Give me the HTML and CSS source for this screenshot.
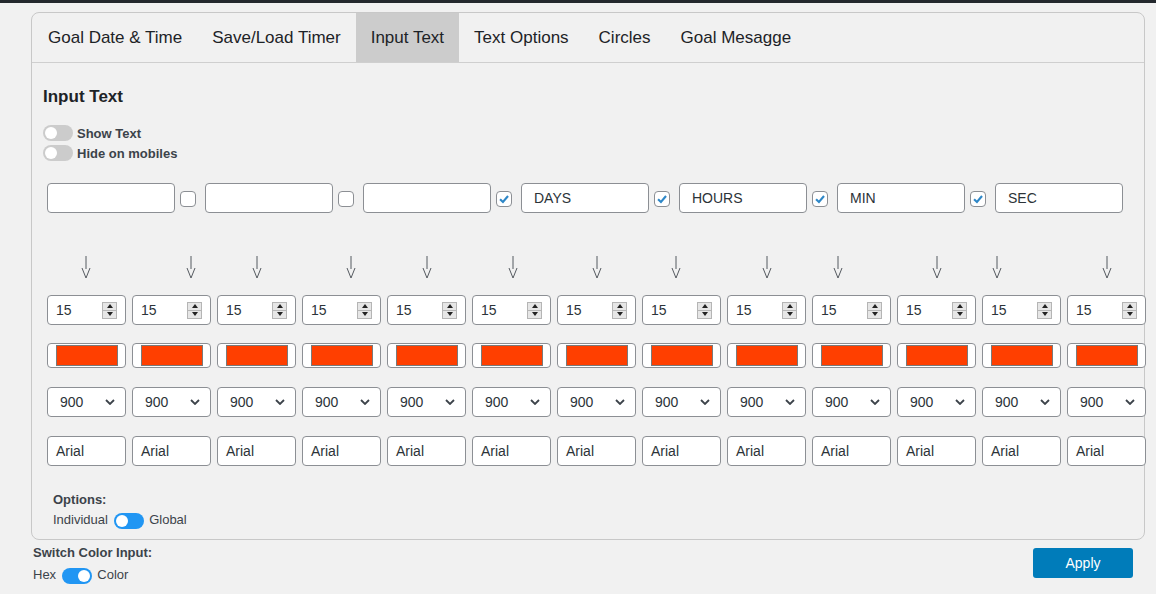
FILE: index.html
```html
<!DOCTYPE html>
<html lang="en">
<head>
    <meta charset="UTF-8">
    <title>Countdown Settings</title>
    <link rel="stylesheet" href="styles.css">
</head>
<body>
    <div class="admin-bar"></div>

    <div class="panel">
        <div class="tabs">
            <div class="tab">Goal Date &amp; Time</div>
            <div class="tab">Save/Load Timer</div>
            <div class="tab active">Input Text</div>
            <div class="tab">Text Options</div>
            <div class="tab">Circles</div>
            <div class="tab">Goal Mesagge</div>
        </div>

        <div class="tab-body">
            <h2>Input Text</h2>

            <div class="switch-row"><span class="toggle"></span><b>Show Text</b></div>
            <div class="switch-row"><span class="toggle"></span><b>Hide on mobiles</b></div>

            <!-- labels row -->
            <div class="labels">
                <div class="field"></div>
                <span class="check"></span>
                <div class="field"></div>
                <span class="check"></span>
                <div class="field"></div>
                <span class="check on"><svg viewBox="0 0 16 16"><path d="M3.5 8.2 L6.8 11.4 L12.6 4.6"/></svg></span>
                <div class="field">DAYS</div>
                <span class="check on"><svg viewBox="0 0 16 16"><path d="M3.5 8.2 L6.8 11.4 L12.6 4.6"/></svg></span>
                <div class="field">HOURS</div>
                <span class="check on"><svg viewBox="0 0 16 16"><path d="M3.5 8.2 L6.8 11.4 L12.6 4.6"/></svg></span>
                <div class="field">MIN</div>
                <span class="check on"><svg viewBox="0 0 16 16"><path d="M3.5 8.2 L6.8 11.4 L12.6 4.6"/></svg></span>
                <div class="field">SEC</div>
            </div>

            <div class="grid-row arrows">
                <div class="cell"><svg class="arrow" style="margin-left: 34px" viewBox="0 0 10 24"><path d="M5 1 V14 M1 13 L5 23 L9 13"/></svg></div>
                <div class="cell"><svg class="arrow" style="margin-left: 54px" viewBox="0 0 10 24"><path d="M5 1 V14 M1 13 L5 23 L9 13"/></svg></div>
                <div class="cell"><svg class="arrow" style="margin-left: 35px" viewBox="0 0 10 24"><path d="M5 1 V14 M1 13 L5 23 L9 13"/></svg></div>
                <div class="cell"><svg class="arrow" style="margin-left: 44px" viewBox="0 0 10 24"><path d="M5 1 V14 M1 13 L5 23 L9 13"/></svg></div>
                <div class="cell"><svg class="arrow" style="margin-left: 35px" viewBox="0 0 10 24"><path d="M5 1 V14 M1 13 L5 23 L9 13"/></svg></div>
                <div class="cell"><svg class="arrow" style="margin-left: 36px" viewBox="0 0 10 24"><path d="M5 1 V14 M1 13 L5 23 L9 13"/></svg></div>
                <div class="cell"><svg class="arrow" style="margin-left: 35px" viewBox="0 0 10 24"><path d="M5 1 V14 M1 13 L5 23 L9 13"/></svg></div>
                <div class="cell"><svg class="arrow" style="margin-left: 29px" viewBox="0 0 10 24"><path d="M5 1 V14 M1 13 L5 23 L9 13"/></svg></div>
                <div class="cell"><svg class="arrow" style="margin-left: 35px" viewBox="0 0 10 24"><path d="M5 1 V14 M1 13 L5 23 L9 13"/></svg></div>
                <div class="cell"><svg class="arrow" style="margin-left: 21px" viewBox="0 0 10 24"><path d="M5 1 V14 M1 13 L5 23 L9 13"/></svg></div>
                <div class="cell"><svg class="arrow" style="margin-left: 35px" viewBox="0 0 10 24"><path d="M5 1 V14 M1 13 L5 23 L9 13"/></svg></div>
                <div class="cell"><svg class="arrow" style="margin-left: 10px" viewBox="0 0 10 24"><path d="M5 1 V14 M1 13 L5 23 L9 13"/></svg></div>
                <div class="cell"><svg class="arrow" style="margin-left: 35px" viewBox="0 0 10 24"><path d="M5 1 V14 M1 13 L5 23 L9 13"/></svg></div>
            </div>

            <!-- font sizes -->
            <div class="grid-row">
                <div class="cell box number">15<span class="spin"><i class="up"></i><i class="down"></i></span></div>
                <div class="cell box number">15<span class="spin"><i class="up"></i><i class="down"></i></span></div>
                <div class="cell box number">15<span class="spin"><i class="up"></i><i class="down"></i></span></div>
                <div class="cell box number">15<span class="spin"><i class="up"></i><i class="down"></i></span></div>
                <div class="cell box number">15<span class="spin"><i class="up"></i><i class="down"></i></span></div>
                <div class="cell box number">15<span class="spin"><i class="up"></i><i class="down"></i></span></div>
                <div class="cell box number">15<span class="spin"><i class="up"></i><i class="down"></i></span></div>
                <div class="cell box number">15<span class="spin"><i class="up"></i><i class="down"></i></span></div>
                <div class="cell box number">15<span class="spin"><i class="up"></i><i class="down"></i></span></div>
                <div class="cell box number">15<span class="spin"><i class="up"></i><i class="down"></i></span></div>
                <div class="cell box number">15<span class="spin"><i class="up"></i><i class="down"></i></span></div>
                <div class="cell box number">15<span class="spin"><i class="up"></i><i class="down"></i></span></div>
                <div class="cell box number">15<span class="spin"><i class="up"></i><i class="down"></i></span></div>
            </div>

            <!-- colors -->
            <div class="grid-row colors">
                <div class="cell box color"><span class="swatch"></span></div>
                <div class="cell box color"><span class="swatch"></span></div>
                <div class="cell box color"><span class="swatch"></span></div>
                <div class="cell box color"><span class="swatch"></span></div>
                <div class="cell box color"><span class="swatch"></span></div>
                <div class="cell box color"><span class="swatch"></span></div>
                <div class="cell box color"><span class="swatch"></span></div>
                <div class="cell box color"><span class="swatch"></span></div>
                <div class="cell box color"><span class="swatch"></span></div>
                <div class="cell box color"><span class="swatch"></span></div>
                <div class="cell box color"><span class="swatch"></span></div>
                <div class="cell box color"><span class="swatch"></span></div>
                <div class="cell box color"><span class="swatch"></span></div>
            </div>

            <!-- font weights -->
            <div class="grid-row">
                <div class="cell box select">900<svg viewBox="0 0 10 6"><path d="M1 1 L5 5 L9 1"/></svg></div>
                <div class="cell box select">900<svg viewBox="0 0 10 6"><path d="M1 1 L5 5 L9 1"/></svg></div>
                <div class="cell box select">900<svg viewBox="0 0 10 6"><path d="M1 1 L5 5 L9 1"/></svg></div>
                <div class="cell box select">900<svg viewBox="0 0 10 6"><path d="M1 1 L5 5 L9 1"/></svg></div>
                <div class="cell box select">900<svg viewBox="0 0 10 6"><path d="M1 1 L5 5 L9 1"/></svg></div>
                <div class="cell box select">900<svg viewBox="0 0 10 6"><path d="M1 1 L5 5 L9 1"/></svg></div>
                <div class="cell box select">900<svg viewBox="0 0 10 6"><path d="M1 1 L5 5 L9 1"/></svg></div>
                <div class="cell box select">900<svg viewBox="0 0 10 6"><path d="M1 1 L5 5 L9 1"/></svg></div>
                <div class="cell box select">900<svg viewBox="0 0 10 6"><path d="M1 1 L5 5 L9 1"/></svg></div>
                <div class="cell box select">900<svg viewBox="0 0 10 6"><path d="M1 1 L5 5 L9 1"/></svg></div>
                <div class="cell box select">900<svg viewBox="0 0 10 6"><path d="M1 1 L5 5 L9 1"/></svg></div>
                <div class="cell box select">900<svg viewBox="0 0 10 6"><path d="M1 1 L5 5 L9 1"/></svg></div>
                <div class="cell box select">900<svg viewBox="0 0 10 6"><path d="M1 1 L5 5 L9 1"/></svg></div>
            </div>

            <!-- font families -->
            <div class="grid-row">
                <div class="cell box">Arial</div>
                <div class="cell box">Arial</div>
                <div class="cell box">Arial</div>
                <div class="cell box">Arial</div>
                <div class="cell box">Arial</div>
                <div class="cell box">Arial</div>
                <div class="cell box">Arial</div>
                <div class="cell box">Arial</div>
                <div class="cell box">Arial</div>
                <div class="cell box">Arial</div>
                <div class="cell box">Arial</div>
                <div class="cell box">Arial</div>
                <div class="cell box">Arial</div>
            </div>

            <div class="options">
                <b>Options:</b>
                <div class="choice">Individual <span class="toggle blue"></span> Global</div>
            </div>
        </div>
    </div>

    <div class="footer">
        <div class="color-switch">
            <b>Switch Color Input:</b>
            <div class="choice">Hex <span class="toggle blue right"></span> Color</div>
        </div>
        <button class="apply">Apply</button>
    </div>
</body>
</html>
```

FILE: styles.css
```css
body {
    margin: 0;
    background-color: #f1f1f1;
    color: #3c434a;
    font-family: "Liberation Sans", Arial, sans-serif;
    font-size: 13px;
}

.admin-bar {
    height: 3px;
    background-color: #23282d;
}

.panel {
    margin: 9px 0 0 31px;
    width: 1112px;
    border: 1px solid #c8c8c8;
    border-radius: 8px;
}

.tabs {
    display: flex;
    border-bottom: 1px solid #cfcfcf;
}

.tab {
    padding: 0 15px;
    height: 49px;
    line-height: 50px;
    font-size: 17px;
    color: #1d2327;
}

.tab:first-child {
    padding-left: 16px;
}

.tab.active {
    background-color: #cccccc;
}

.tab-body {
    padding: 21px 0 9px 11px;
}

h2 {
    margin: 0 0 13px;
    font-size: 17px;
    line-height: 26px;
    font-weight: 600;
    color: #1d2327;
}

.switch-row {
    display: flex;
    align-items: center;
    height: 20px;
}

.switch-row b {
    margin-left: 4px;
}

.toggle {
    display: inline-block;
    position: relative;
    width: 30px;
    height: 16px;
    border-radius: 8px;
    background-color: #cccccc;
    vertical-align: middle;
}

.toggle::after {
    content: "";
    position: absolute;
    top: 2px;
    left: 2px;
    width: 12px;
    height: 12px;
    border-radius: 50%;
    background-color: #fff;
}

.toggle.blue {
    background-color: #2196f3;
}

.toggle.right::after {
    left: 16px;
}

.labels {
    display: flex;
    align-items: center;
    margin: 20px 0 0 4px;
}

.field {
    box-sizing: border-box;
    width: 128px;
    height: 30px;
    padding-left: 12px;
    line-height: 29px;
    font-size: 14px;
    color: #2c3338;
    background-color: #fff;
    border: 1px solid #8c8f94;
    border-radius: 4px;
}

.check {
    box-sizing: border-box;
    width: 16px;
    height: 16px;
    margin: 2px 9px 0 5px;
    background-color: #fff;
    border: 1px solid #8c8f94;
    border-radius: 4px;
}

.check svg {
    display: block;
    width: 14px;
    height: 14px;
    fill: none;
    stroke: #2e87c7;
    stroke-width: 2.4;
}

.grid-row {
    display: flex;
    gap: 6px;
    margin: 19px 0 0 4px;
}

.arrows {
    margin-top: 42px;
    margin-bottom: -3px;
}

.cell {
    flex: 0 0 79px;
    box-sizing: border-box;
}

.arrow {
    display: block;
    width: 10px;
    height: 24px;
    fill: none;
    stroke: #555a60;
    stroke-width: 1;
}

.box {
    height: 30px;
    padding-left: 8px;
    line-height: 29px;
    font-size: 14px;
    color: #2c3338;
    background-color: #fff;
    border: 1px solid #8c8f94;
    border-radius: 4px;
}

.number {
    display: flex;
    align-items: center;
    justify-content: space-between;
    padding-right: 8px;
}

.spin {
    display: flex;
    flex-direction: column;
    width: 15px;
    height: 17px;
    box-sizing: border-box;
    border: 1px solid #b5b5b5;
    background-color: #e6e6e6;
}

.spin i {
    flex: 1;
    display: flex;
    justify-content: center;
    align-items: center;
}

.spin i.up {
    border-bottom: 1px solid #b5b5b5;
}

.spin i::before {
    content: "";
    border-left: 3px solid transparent;
    border-right: 3px solid transparent;
}

.spin i.up::before {
    border-bottom: 4px solid #222;
}

.spin i.down::before {
    border-top: 4px solid #222;
}

.colors {
    margin-top: 18px;
}

.color {
    height: 25px;
    padding: 1px 7px 1px 8px;
}

.swatch {
    display: block;
    height: 21px;
    box-sizing: border-box;
    background-color: #ff3f00;
    border: 1px solid #7a7a7a;
}

.select {
    display: flex;
    align-items: center;
    justify-content: space-between;
    padding: 0 10px 0 12px;
}

.select svg {
    width: 10px;
    height: 6px;
    fill: none;
    stroke: #3c434a;
    stroke-width: 1.8;
}

.options {
    margin: 24px 0 0 10px;
    line-height: 20px;
}

.choice .toggle {
    margin: 0 2px;
}

.color-switch .choice {
    margin-top: 2px;
}

.footer {
    display: flex;
    justify-content: space-between;
    align-items: flex-start;
    width: 1100px;
    padding: 3px 0 0 33px;
    line-height: 20px;
}

.apply {
    margin-top: 5px;
    width: 100px;
    height: 30px;
    font-family: "Liberation Sans", Arial, sans-serif;
    font-size: 14px;
    color: #fff;
    background-color: #007cba;
    border: none;
    border-radius: 3px;
}
```
